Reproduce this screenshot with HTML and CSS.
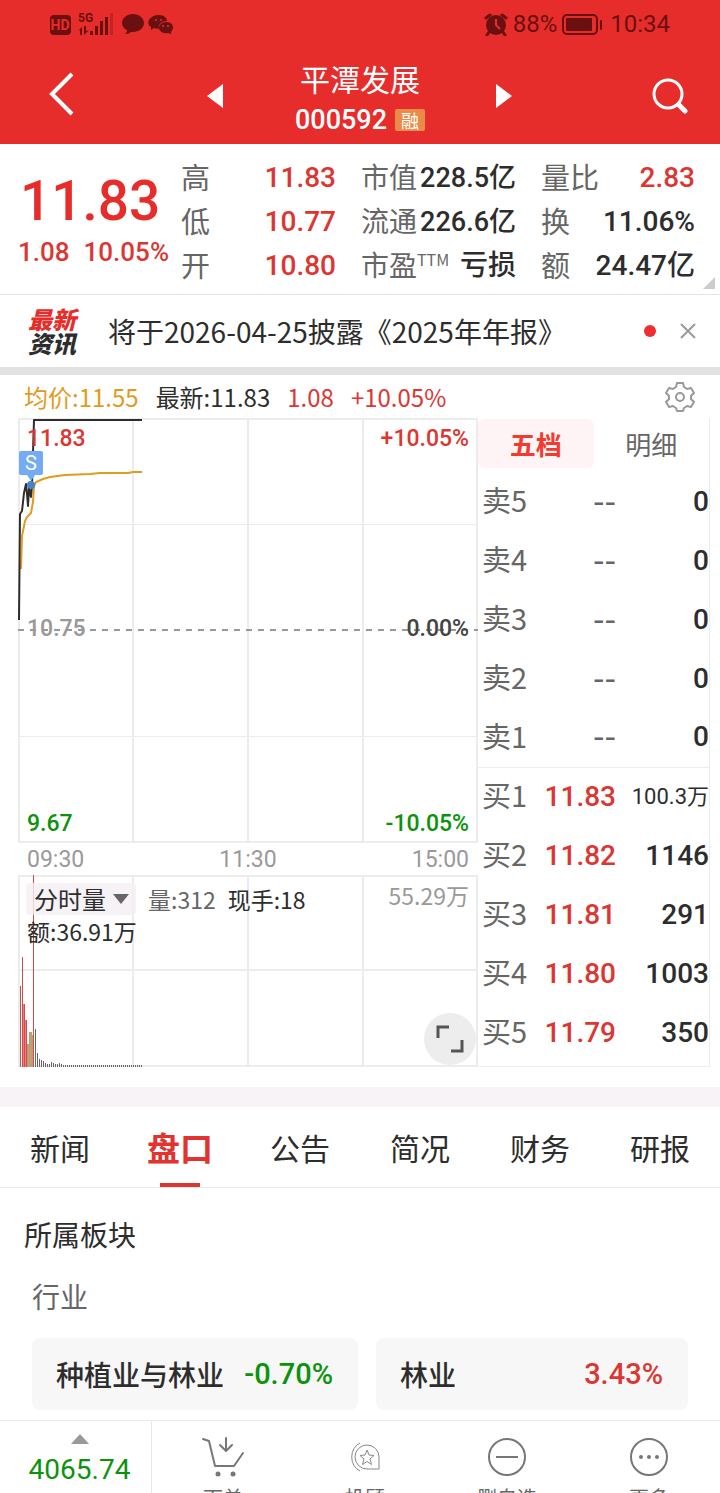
FILE: index.html
```html
<!DOCTYPE html>
<html lang="zh-CN">
<head>
<meta charset="utf-8">
<meta name="viewport" content="width=device-width, initial-scale=1">
<title>平潭发展 000592</title>
<link rel="stylesheet" href="styles.css">
</head>
<body>
<div class="app">
  <header class="top">
    <div class="status">
      <div class="status-group">
        <svg width="124" height="24" viewBox="0 0 124 24" aria-hidden="true">
          <g fill="#6b1010">
            <rect x="0" y="3" width="21" height="20" rx="4"/>
            <text x="10" y="18" class="hd" text-anchor="middle">HD</text>
            <text x="28" y="10" class="net">5G</text>
            <path d="M28 19l4-4v8h-2v-5zM34 14h2v5l3-1-5 5z"/>
            <rect x="40" y="19" width="3" height="4"/><rect x="45" y="14" width="3" height="9"/><rect x="50" y="9" width="3" height="14"/><rect x="55" y="5" width="3" height="18"/>
            <rect x="60" y="1" width="3" height="22" opacity=".3"/>
            <path d="M83 2c6 0 11 4 11 9s-5 9-11 9h-2c-1 1-3 2-6 2 1-1 2-2 2-4-3-1-5-4-5-7 0-5 5-9 11-9z"/>
            <path d="M109 3c5 0 8 3 8 6-6 0-9 4-8 8l-5-1-3 2v-3c-6-4-1-12 8-12z"/>
            <path d="M116 10c4 0 7 2 7 5 0 2-1 4-2 5v2l-3-1c-5 1-9-2-9-5s3-6 7-6z"/>
          </g>
          <g fill="#e72d2b"><circle cx="106" cy="8" r="1"/><circle cx="111" cy="8" r="1"/><circle cx="113" cy="14" r="1"/><circle cx="118" cy="14" r="1"/></g>
        </svg>
      </div>
      <div class="status-group">
        <svg width="24" height="24" viewBox="0 0 24 24" aria-hidden="true">
          <circle cx="12" cy="13" r="10" fill="#6b1010"/>
          <path d="M2 6l4-3M22 6l-4-3M5 20l-2 3M19 20l2 3" stroke="#6b1010" stroke-width="3" stroke-linecap="round"/>
          <path d="M12 7v6l4 4" fill="none" stroke="#e72d2b" stroke-width="2"/>
        </svg>
        <span>88%</span>
        <svg width="41" height="24" viewBox="0 0 41 24" aria-hidden="true">
          <rect x="1" y="3" width="34" height="19" rx="4" fill="none" stroke="#6b1010" stroke-width="2"/>
          <rect x="4" y="6" width="26" height="13" rx="1" fill="#6b1010"/><rect x="38" y="8" width="2" height="10" rx="1" fill="#6b1010"/>
        </svg>
        <span class="clock">10:34</span>
      </div>
    </div>
    <div class="nav">
      <button class="icon-btn back" aria-label="返回"><svg width="28" height="44" viewBox="0 0 28 44"><path d="M24 2L4 22l20 20" fill="none" stroke="#fff" stroke-width="4"/></svg></button>
      <button class="icon-btn prev" aria-label="上一只"><svg width="16" height="24" viewBox="0 0 16 24"><path d="M16 0v24L0 12z" fill="#fff"/></svg></button>
      <div class="title">
        <h1>平潭发展</h1>
        <div class="code"><span>000592</span><span class="badge">融</span></div>
      </div>
      <button class="icon-btn next" aria-label="下一只"><svg width="16" height="24" viewBox="0 0 16 24"><path d="M0 0v24l16-12z" fill="#fff"/></svg></button>
      <button class="icon-btn search" aria-label="搜索"><svg width="36" height="36" viewBox="0 0 36 36" fill="none" stroke="#fff" stroke-linecap="round"><circle cx="16" cy="16" r="14" stroke-width="3"/><path d="M27 27l6 6" stroke-width="5"/></svg></button>
    </div>
  </header>

  <section class="quote">
    <div class="price">
      <strong>11.83</strong>
      <div class="change"><span>1.08</span><span>10.05%</span></div>
    </div>
    <dl class="stats">
      <div><dt class="wide">高</dt><dd class="up">11.83</dd></div>
      <div><dt class="wide">低</dt><dd class="up">10.77</dd></div>
      <div><dt class="wide">开</dt><dd class="up">10.80</dd></div>
    </dl>
    <dl class="stats">
      <div><dt>市值</dt><dd class="tight">228.5亿</dd></div>
      <div><dt>流通</dt><dd class="tight">226.6亿</dd></div>
      <div><dt>市盈<sup>TTM</sup></dt><dd>亏损</dd></div>
    </dl>
    <dl class="stats">
      <div><dt class="wide">量比</dt><dd class="up">2.83</dd></div>
      <div><dt class="wide">换</dt><dd>11.06%</dd></div>
      <div><dt class="wide">额</dt><dd>24.47亿</dd></div>
    </dl>
    <svg class="corner" width="12" height="12" viewBox="0 0 12 12" aria-hidden="true"><path d="M12 0v12H0z" fill="#ccc"/></svg>
  </section>

  <section class="news">
    <div class="news-logo"><span class="red">最新</span><span>资讯</span></div>
    <a href="#report">将于2026-04-25披露《2025年年报》</a>
    <i class="dot"></i>
    <button class="icon-btn close" aria-label="关闭"><svg width="16" height="16" viewBox="0 0 16 16"><path d="M1 1l14 14M15 1L1 15" stroke="#999" stroke-width="2"/></svg></button>
  </section>

  <section class="chart-head">
    <span class="avg">均价:11.55</span><span>最新:11.83</span><span class="up">1.08</span><span class="up">+10.05%</span>
    <button class="icon-btn gear" aria-label="设置"><svg width="32" height="32" viewBox="0 0 32 32" fill="none" stroke="#999" stroke-width="2" stroke-linejoin="round"><path d="M13 2h6l1 4 3 2 4-1 3 5-3 3v3l3 3-3 5-4-1-3 2-1 3h-6l-1-3-3-2-4 1-3-5 3-3v-3l-3-3 3-5 4 1 3-2z"/><circle cx="16" cy="16" r="4"/></svg></button>
  </section>

  <main class="market">
    <div class="charts">
      <div class="plot price-plot">
        <svg class="canvas" viewBox="0 0 460 425" preserveAspectRatio="none" aria-hidden="true">
          <g fill="none" stroke="#ececec">
            <path stroke-width="2" d="M0 1h460M0 424h460M1 0v425M115 0v425M230 0v425M345 0v425M459 0v425"/>
            <path d="M0 106.500h460M0 318.500h460"/>
            <path stroke="#999" stroke-width="2" stroke-dasharray="6 6" d="M0 212h460"/>
          </g>
          <path d="M3 151L4 118 7 103 9 99 13 95 15 84 16 68 18 64 25 61 32 59 47 57 72 56 82 55 110 55 115 54 124 54" fill="none" stroke="#e29b1d" stroke-width="2"/>
          <path d="M1 202L2 96 4 93 6 75 8 66 9 76 10 88 11 70 13 79 14 67 16 2H124" fill="none" stroke="#2d2d2d" stroke-width="2" stroke-linejoin="round"/>
        </svg>
        <div class="ends up"><span>11.83</span><span>+10.05%</span></div>
        <div class="ends mid"><span class="muted">10.75</span><span>0.00%</span></div>
        <div class="ends down"><span>9.67</span><span>-10.05%</span></div>
        <svg class="marker" width="24" height="38" viewBox="0 0 24 38"><path d="M2 0h20a2 2 0 0 1 2 2v20a2 2 0 0 1-2 2h-6l-4 6-4-6H2a2 2 0 0 1-2-2V2a2 2 0 0 1 2-2z" fill="#73abf5"/><circle cx="12" cy="34" r="4" fill="#4482cc"/><text x="12" y="19" text-anchor="middle" fill="#fff">S</text></svg>
      </div>
      <div class="times"><span>09:30</span><span>11:30</span><span>15:00</span></div>
      <div class="plot volume-plot">
        <svg class="canvas" viewBox="0 0 460 192" preserveAspectRatio="none" aria-hidden="true">
          <path fill="none" stroke="#ececec" stroke-width="2" d="M0 1h460M0 95h460M0 191h460M1 0v192M115 0v192M230 0v192M345 0v192M459 0v192"/>
          <g fill="#f07d7d"><rect x="5" y="129" width="2" height="63"/><rect x="7" y="145" width="2" height="47"/></g>
          <g fill="#bd9f75"><rect x="9" y="169" width="2" height="23"/><rect x="11" y="157" width="3" height="35"/><rect x="14" y="160" width="1" height="32"/></g>
          <g fill="#d34a4a"><rect x="2" y="111" width="1" height="81"/><rect x="4" y="82" width="1" height="110"/><rect x="6" y="129" width="1" height="63"/><rect x="8" y="145" width="1" height="47"/><rect x="15" y="0" width="1" height="192"/></g>
          <path stroke="#666" fill="none" d="M17.500 154v38M19.500 178v14M21.500 184v8M23.500 185v7M25.500 186v6M27.500 188v4M29.500 189v3M31.500 189v3M33.500 187v5M35.500 188v4M37.500 189v3M39.500 189v3M41.500 188v4M43.500 189v3"/>
          <path stroke="#666" stroke-width="2" stroke-dasharray="1 1" d="M45 191h80"/>
        </svg>
        <div class="vol-info">
          <button class="vol-select">分时量<svg width="18" height="12" viewBox="0 0 18 12"><path d="M1 1h16L9 11z" fill="#666"/></svg></button>
          <span class="gray">量:312</span><span>现手:18</span><span class="muted max">55.29万</span>
        </div>
        <div class="amount">额:36.91万</div>
        <button class="icon-btn expand" aria-label="全屏"><svg width="28" height="28" viewBox="0 0 28 28" fill="none" stroke="#555" stroke-width="3"><path d="M2 13V2h11M26 15v11H15"/></svg></button>
      </div>
    </div>
    <div class="book">
      <div class="book-tabs"><button class="active">五档</button><button>明细</button></div>
      <table>
        <tbody class="sell">
          <tr><th>卖5</th><td>--</td><td>0</td></tr>
          <tr><th>卖4</th><td>--</td><td>0</td></tr>
          <tr><th>卖3</th><td>--</td><td>0</td></tr>
          <tr><th>卖2</th><td>--</td><td>0</td></tr>
          <tr><th>卖1</th><td>--</td><td>0</td></tr>
        </tbody>
        <tbody class="buy">
          <tr><th>买1</th><td>11.83</td><td class="small">100.3万</td></tr>
          <tr><th>买2</th><td>11.82</td><td>1146</td></tr>
          <tr><th>买3</th><td>11.81</td><td>291</td></tr>
          <tr><th>买4</th><td>11.80</td><td>1003</td></tr>
          <tr><th>买5</th><td>11.79</td><td>350</td></tr>
        </tbody>
      </table>
    </div>
  </main>

  <nav class="tabs">
    <a href="#news">新闻</a><a href="#book" class="active" aria-current="page">盘口</a><a href="#notice">公告</a><a href="#brief">简况</a><a href="#finance">财务</a><a href="#research">研报</a>
  </nav>

  <section class="sector">
    <h2>所属板块</h2>
    <h3>行业</h3>
    <div class="cards">
      <a href="#s1"><span>种植业与林业</span><b class="down">-0.70%</b></a>
      <a href="#s2"><span>林业</span><b class="up">3.43%</b></a>
    </div>
  </section>

  <footer class="bottom">
    <button class="index"><svg width="18" height="10" viewBox="0 0 18 10" aria-hidden="true"><path d="M9 0l9 10H0z" fill="#999"/></svg><span>4065.74</span><small>沪指</small></button>
    <button><svg width="44" height="42" viewBox="0 0 44 42" fill="none" stroke="#777" stroke-width="2" stroke-linecap="round" stroke-linejoin="round"><path d="M2 3l6 2 6 25h19l9-13M25 2v13M19 9l6 6 6-6"/><g fill="#777" stroke="none"><circle cx="17" cy="38" r="2.500"/><circle cx="32" cy="38" r="2.500"/></g></svg><span>下单</span></button>
    <button><svg width="44" height="42" viewBox="0 0 44 42" fill="none" stroke="#888" stroke-width="1"><path d="M36 21v12H24a12 12 0 1 1 12-12zM17 7a16 16 0 0 0 0 28"/><path d="M24 14l2 5 5 .5-4 3.500 1.500 5.500L24 25.500l-4.500 3L21 23l-4-3.500 5-.5z"/></svg><span>投顾</span></button>
    <button><svg width="44" height="42" viewBox="0 0 44 42" fill="none" stroke="#777" stroke-width="2"><circle cx="22" cy="21" r="18"/><path d="M11 21h22"/></svg><span>删自选</span></button>
    <button><svg width="44" height="42" viewBox="0 0 44 42" fill="none" stroke="#777" stroke-width="2"><circle cx="22" cy="21" r="18"/><g fill="#777" stroke="none"><circle cx="14" cy="21" r="2"/><circle cx="22" cy="21" r="2"/><circle cx="30" cy="21" r="2"/></g></svg><span>更多</span></button>
  </footer>
</div>
</body>
</html>
```
FILE: styles.css
```css
* { box-sizing: border-box; }
body { margin: 0; background: #fff; color: #2d2d2d; font-family: "Noto Sans CJK SC", "Noto Sans", sans-serif; }
h1, h2, h3, dl, dd { margin: 0; font-weight: 400; }
button { margin: 0; padding: 0; border: 0; background: none; color: inherit; font: inherit; }
a { color: inherit; text-decoration: none; }
svg { display: block; flex: none; }
.app { display: flex; flex-direction: column; height: 100vh; overflow: hidden; }
.app > * { flex: none; }
.up { color: #dc3633; }
.down { color: #0c930c; }
.muted { color: #999; }
.gray { color: #666; }
.icon-btn { display: flex; align-items: center; justify-content: center; }

.top { background: #e72d2b; color: #fff; }
.status { display: flex; justify-content: space-between; height: 48px; padding: 0 50px; align-items: center; color: #6b1010; font: 400 24px Roboto, sans-serif; }
.status-group { display: flex; align-items: center; gap: 5px; }
.clock { margin-left: 2px; }
.hd { font: 700 14px Roboto, sans-serif; fill: #e72d2b; }
.net { font: 700 12px Roboto, sans-serif; }
.nav { display: flex; justify-content: space-between; height: 96px; padding: 0 32px 0 48px; align-items: center; }
.nav .back { padding-bottom: 4px; }
.nav .prev { padding-left: 60px; }
.nav .next { padding-right: 68px; }
.title { padding-top: 4px; text-align: center; }
.title h1 { font-size: 30px; line-height: 44px; }
.code { display: flex; justify-content: center; align-items: center; gap: 8px; height: 40px; font: 500 27px/36px Roboto, sans-serif; }
.badge { padding: 0 6px; border-radius: 2px; background: #e98c47; font: 400 18px/22px "Noto Sans CJK SC", sans-serif; }

.quote { position: relative; display: grid; grid-template-columns: 163fr 180fr 180fr 154fr; padding: 12px 25px 6px 18px; border-bottom: 1px solid #e4e4e4; }
.price { color: #e72d2b; font-family: Roboto, sans-serif; font-weight: 500; }
.price strong { display: block; padding: 15px 0 0 2px; font-size: 55px; line-height: 60px; font-weight: 500; }
.change { display: flex; gap: 14px; padding-top: 3px; font-size: 26px; line-height: 36px; white-space: nowrap; color: #dc3633; }
.stats { padding-right: 25px; }
.stats:last-of-type { padding-right: 0; }
.stats > div { display: flex; justify-content: space-between; height: 44px; line-height: 40px; white-space: nowrap; }
.stats dt { color: #666; font-size: 28px; }
.stats dt.wide { font-size: 29px; }
.stats dd { font: 500 28px/44px Roboto, "Noto Sans CJK SC", sans-serif; }
.stats dd.tight { font-size: 27px; }
sup { font-size: 16px; line-height: 0; }
.corner { position: absolute; right: 5px; bottom: 5px; }

.news { display: flex; align-items: center; height: 72px; padding: 0 24px 0 28px; font-size: 28px; }
.news-logo { display: flex; flex-direction: column; width: 80px; font-size: 24px; line-height: 24px; font-weight: 900; font-style: italic; }
.news-logo .red { color: #e72d2b; }
.news a { flex: 1; }
.dot { width: 12px; height: 12px; margin-right: 24px; border-radius: 50%; background: #ee2f30; }
.chart-head { display: flex; align-items: center; gap: 17px; height: 51px; padding: 0 24px; border-top: 8px solid #e4e1e5; font-size: 24px; line-height: 34px; }
.avg { color: #e29b1d; }
.gear { margin-left: auto; }

.market { display: grid; grid-template-columns: 460fr 232fr; padding: 0 10px 20px 18px; }
.charts { display: flex; flex-direction: column; }
.plot { position: relative; }
.canvas { position: absolute; inset: 0; width: 100%; height: 100%; }
.price-plot { display: flex; flex-direction: column; justify-content: space-between; height: 425px; padding: 6px 9px 4px; }
.ends { position: relative; display: flex; justify-content: space-between; font: 500 23px/30px Roboto, sans-serif; }
.mid { padding-bottom: 6px; color: #444; }
.marker { position: absolute; left: 1px; top: 33px; font: 400 20px Roboto, sans-serif; }
.times { display: flex; justify-content: space-between; height: 32px; padding: 0 9px; font: 400 23px/34px Roboto, sans-serif; color: #999; }
.volume-plot { flex: 1; padding: 8px 9px; font-size: 23px; line-height: 32px; }
.vol-info { position: relative; display: flex; gap: 12px; white-space: nowrap; }
.vol-select { display: flex; align-items: center; gap: 6px; margin-left: -1px; padding: 0 6px 0 8px; border-radius: 4px; background: rgba(244, 239, 244, .8); font-size: 24px; }
.vol-info .max { margin: -4px 0 0 auto; }
.amount { position: relative; }
.expand { position: absolute; right: 2px; bottom: 2px; width: 52px; height: 52px; border-radius: 50%; background: #ededed; }
.book { padding-bottom: 4px; border-right: 1px solid #ececec; border-bottom: 1px solid #ececec; }
.book-tabs { display: grid; grid-template-columns: 1fr 1fr; height: 54px; padding: 1px 0 4px; font-size: 26px; color: #666; }
.book-tabs .active { border-radius: 6px; background: #fff4f5; color: #f23a31; font-weight: 700; }
table { width: 100%; border-collapse: collapse; table-layout: fixed; }
tr { height: 59px; }
th, td { padding: 0; }
th { width: 60px; padding: 0 0 5px 4px; text-align: left; color: #666; font-size: 29px; line-height: 40px; font-weight: 400; }
td { text-align: right; font: 500 28px/40px Roboto, "Noto Sans CJK SC", sans-serif; }
td:nth-child(2) { width: 78px; color: #666; }
.sell td:nth-child(2) { font: 400 32px/40px "DejaVu Sans", sans-serif; }
.buy { border-top: 1px solid #ececec; }
.buy td:nth-child(2) { color: #dc3633; }
td.small { font-size: 22px; font-weight: 400; }

.tabs { display: grid; grid-template-columns: repeat(6, 1fr); border-top: 20px solid #f8f3f7; border-bottom: 1px solid #e8e8e8; font-size: 30px; line-height: 80px; text-align: center; }
.tabs .active { color: #e1332f; font-size: 33px; font-weight: 700; background: linear-gradient(#dc3633, #dc3633) bottom center / 40px 4px no-repeat; }
.sector { padding: 26px 32px 10px; font-size: 28px; }
.sector h2 { margin-left: -8px; font-size: 28px; line-height: 40px; }
.sector h3 { padding: 22px 0; font-size: 28px; line-height: 40px; color: #666; }
.cards { display: grid; grid-template-columns: 326fr 312fr; gap: 18px; }
.cards a { display: flex; align-items: center; justify-content: space-between; height: 72px; padding: 0 25px 0 24px; border-radius: 8px; background: #f7f7f7; font-weight: 500; }
.cards b { font: 500 29px Roboto, sans-serif; }
.bottom { display: grid; grid-template-columns: 152fr 142fr 142fr 142fr 142fr; height: 100px; border-top: 1px solid #e8e8e8; }
.bottom button { display: flex; flex-direction: column; align-items: center; padding-top: 15px; color: #666; font-size: 20px; line-height: 40px; }
.bottom .index { padding: 13px 0 0 8px; border-right: 1px solid #e8e8e8; color: #0c930c; }
.index span { padding-top: 8px; font: 400 28px/36px Roboto, sans-serif; }
.index small { align-self: flex-start; padding-left: 22px; color: #666; font-size: 20px; line-height: 30px; }
```
